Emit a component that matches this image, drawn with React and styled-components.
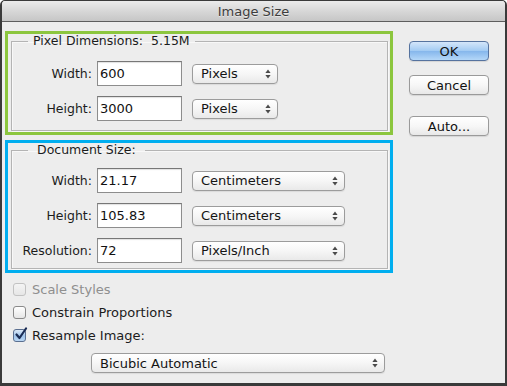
import React from "react";
import styled, { createGlobalStyle } from "styled-components";

const Global = createGlobalStyle`
  html, body { margin: 0; padding: 0; background: #ffffff; }
  body { font-family: "DejaVu Sans", "Liberation Sans", sans-serif; }
  * { box-sizing: border-box; }
`;

const Window = styled.div`
  width: 507px;
  height: 386px;
  background: #ededed;
  border: 2px solid #3a3a3a;
  border-top-width: 1px;
  border-bottom-width: 3px;
  border-radius: 5px 5px 0 0;
  overflow: hidden;
  display: flex;
  flex-direction: column;
  font-size: 12.5px;
  color: #1c1c1c;
`;

const TitleBar = styled.div`
  height: 21px;
  flex: none;
  display: flex;
  align-items: center;
  justify-content: center;
  background: linear-gradient(#ebebeb, #d9d9d9 45%, #c6c6c6);
  border-bottom: 1px solid #5e5e5e;
  font-size: 13px;
  color: #3c3c3c;
  text-shadow: 0 1px 0 rgba(255, 255, 255, 0.55);
  padding-top: 1px;
`;

const Body = styled.div`
  flex: 1;
  display: flex;
  gap: 16px;
  padding: 9px 0 0 3px;
`;

const LeftCol = styled.div`
  width: 388px;
  display: flex;
  flex-direction: column;
`;

const Highlight = styled.div`
  height: ${(p) => p.$h}px;
  margin-top: ${(p) => p.$mt || 0}px;
  border: 3px solid ${(p) => p.$color};
  padding: 0 2px 0 3px;
`;

const Group = styled.fieldset`
  margin: 0;
  height: ${(p) => p.$h}px;
  border: 1px solid #b4b4b4;
  box-shadow: inset 1px 1px 0 #f8f8f8, 1px 1px 0 #f8f8f8;
  padding: ${(p) => p.$top}px 0 0 0;
  min-width: 0;
  display: flex;
  flex-direction: column;
  gap: 10px;
`;

const Legend = styled.legend`
  margin-left: 16px;
  padding: 0 ${(p) => p.$pad}px;
  line-height: 14px;
  font-size: 12.5px;
  white-space: pre;
  color: #1c1c1c;
`;

const Row = styled.div`
  display: flex;
  align-items: center;
  height: 25px;
`;

const Label = styled.div`
  width: 85px;
  padding-right: 5px;
  text-align: right;
`;

const TextField = styled.div`
  width: 85px;
  height: 25px;
  margin-right: 10px;
  background: #ffffff;
  border: 1px solid #8d8d8d;
  border-top-color: #777777;
  box-shadow: inset 0 1px 1px rgba(0, 0, 0, 0.12);
  padding-left: 2px;
  display: flex;
  align-items: center;
  font-size: 13px;
  color: #111;
`;

const SelectBox = styled.div`
  width: ${(p) => p.$w}px;
  height: 20px;
  margin-left: ${(p) => p.$ml || 0}px;
  border: 1px solid #9c9c9c;
  border-radius: 4px;
  background: linear-gradient(#ffffff, #f6f6f6 50%, #e9e9e9);
  box-shadow: 0 1px 1px rgba(0, 0, 0, 0.08);
  display: flex;
  align-items: center;
  justify-content: space-between;
  padding: 0 6px 0 8px;
  font-size: 13px;
  color: #141414;
`;

const Arrows = () => (
  <svg width="6" height="10" viewBox="0 0 6 10">
    <path d="M3 0.5 L5.6 4 L0.4 4 Z" fill="#4a4a4a" />
    <path d="M3 9.5 L5.6 6 L0.4 6 Z" fill="#4a4a4a" />
  </svg>
);

const Select = ({ w, ml, children }) => (
  <SelectBox $w={w} $ml={ml}>
    <span>{children}</span>
    <Arrows />
  </SelectBox>
);

const Options = styled.div`
  display: flex;
  flex-direction: column;
  padding: 5px 0 0 8px;
`;

const CheckRow = styled.div`
  height: 23px;
  display: flex;
  align-items: center;
  gap: 6px;
  color: ${(p) => (p.$disabled ? "#8f8f8f" : "#1c1c1c")};
  font-size: 13px;
`;

const Box = styled.div`
  width: 13px;
  height: 13px;
  border-radius: 3px;
  border: 1px solid ${(p) => (p.$disabled ? "#c2c2c2" : p.$checked ? "#5a6f90" : "#8a8a8a")};
  background: ${(p) =>
    p.$checked
      ? "linear-gradient(#dbe9f8, #9fc3ea 55%, #b9d6f3)"
      : p.$disabled
      ? "linear-gradient(#f4f4f4, #e6e6e6)"
      : "linear-gradient(#ffffff, #e6e6e6)"};
  position: relative;
  flex: none;
`;

const CheckMark = styled.svg`
  position: absolute;
  left: 0px;
  top: -3px;
`;

const Checkbox = ({ checked, disabled, children }) => (
  <CheckRow $disabled={disabled}>
    <Box $checked={checked} $disabled={disabled}>
      {checked && (
        <CheckMark width="14" height="14" viewBox="0 0 14 14">
          <path d="M2.5 7.5 L5.5 11 L12 1.5" fill="none" stroke="#1a2c55" strokeWidth="2.2" strokeLinecap="round" strokeLinejoin="round" />
        </CheckMark>
      )}
    </Box>
    <span>{children}</span>
  </CheckRow>
);

const ResampleRow = styled.div`
  margin-top: 6px;
`;

const RightCol = styled.div`
  width: 80px;
  display: flex;
  flex-direction: column;
  padding-top: 10px;
`;

const Button = styled.div`
  height: 20px;
  margin-top: ${(p) => p.$mt || 0}px;
  border-radius: 4px;
  border: 1px solid ${(p) => (p.$primary ? "#56739f" : "#9a9a9a")};
  background: ${(p) =>
    p.$primary
      ? "linear-gradient(#d4e6fa, #a3cbf3 48%, #86b7ec 52%, #b4d7f8)"
      : "linear-gradient(#ffffff, #f7f7f7 50%, #e8e8e8)"};
  box-shadow: 0 1px 1px rgba(0, 0, 0, 0.1);
  display: flex;
  align-items: center;
  justify-content: center;
  font-size: 13px;
  color: #111;
`;

export default function App() {
  return (
    <>
      <Global />
      <Window>
        <TitleBar>Image Size</TitleBar>
        <Body>
          <LeftCol>
            <Highlight $color="#8cc63e" $h={104}>
              <Group $h={97} $top={13}>
                <Legend $pad={5}>{"Pixel Dimensions:  5.15M"}</Legend>
                <Row>
                  <Label>Width:</Label>
                  <TextField>600</TextField>
                  <Select w={86}>Pixels</Select>
                </Row>
                <Row>
                  <Label>Height:</Label>
                  <TextField>3000</TextField>
                  <Select w={86}>Pixels</Select>
                </Row>
              </Group>
            </Highlight>
            <Highlight $color="#00aeef" $h={133} $mt={5}>
              <Group $h={126} $top={11}>
                <Legend $pad={9}>Document Size:</Legend>
                <Row>
                  <Label>Width:</Label>
                  <TextField>21.17</TextField>
                  <Select w={153}>Centimeters</Select>
                </Row>
                <Row>
                  <Label>Height:</Label>
                  <TextField>105.83</TextField>
                  <Select w={153}>Centimeters</Select>
                </Row>
                <Row>
                  <Label>Resolution:</Label>
                  <TextField>72</TextField>
                  <Select w={153}>Pixels/Inch</Select>
                </Row>
              </Group>
            </Highlight>
            <Options>
              <Checkbox disabled>Scale Styles</Checkbox>
              <Checkbox>Constrain Proportions</Checkbox>
              <Checkbox checked>Resample Image:</Checkbox>
            </Options>
            <ResampleRow>
              <Select w={294} ml={86}>Bicubic Automatic</Select>
            </ResampleRow>
          </LeftCol>
          <RightCol>
            <Button $primary>OK</Button>
            <Button $mt={14}>Cancel</Button>
            <Button $mt={21}>Auto...</Button>
          </RightCol>
        </Body>
      </Window>
    </>
  );
}
